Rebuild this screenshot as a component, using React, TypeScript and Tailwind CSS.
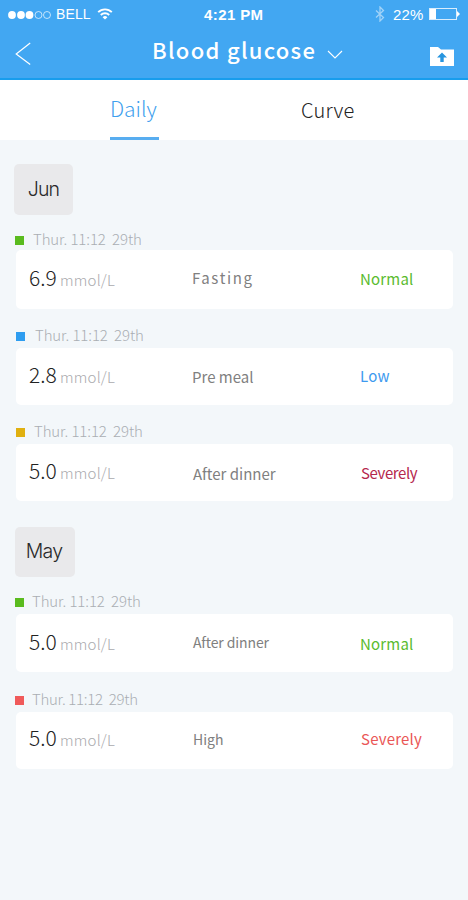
interface IReading {
  date: string;
  marker: string;
  dateStyle: string;
  value: string;
  valueStyle: string;
  period: string;
  periodStyle: string;
  status: string;
  statusStyle: string;
  cardStyle: string;
}

interface IMonth {
  name: string;
  badgeStyle: string;
  readings: IReading[];
}

const months: IMonth[] = [
  {
    name: "Jun",
    badgeStyle: "ml-[14px] mt-[24px] h-[51px] w-[59px]",
    readings: [
      {
        date: "Thur. 11:12  29th",
        marker: "bg-[#5abb1e] ml-[15px]",
        dateStyle: "ml-[9px] tracking-[-0.12px]",
        value: "6.9",
        valueStyle: "pt-[17px]",
        period: "Fasting",
        periodStyle: "pt-[18px] pl-0 text-[15px] tracking-[1.6px]",
        status: "Normal",
        statusStyle: "pt-[19px] pl-0 text-[#5abb2e] tracking-[0.2px]",
        cardStyle: "mt-px h-[59px]",
      },
      {
        date: "Thur. 11:12  29th",
        marker: "bg-[#2e9df0] ml-[16px]",
        dateStyle: "ml-[10px] tracking-[-0.12px]",
        value: "2.8",
        valueStyle: "pt-[16px]",
        period: "Pre meal",
        periodStyle: "pt-[19px] pl-0 text-[15px] tracking-[0px]",
        status: "Low",
        statusStyle: "pt-[18px] pl-0 text-[#3d9aef] tracking-[0.2px]",
        cardStyle: "mt-[3px] h-[57px]",
      },
      {
        date: "Thur. 11:12  29th",
        marker: "bg-[#e0b010] ml-[16px]",
        dateStyle: "ml-[9px] tracking-[-0.12px]",
        value: "5.0",
        valueStyle: "pt-[16px]",
        period: "After dinner",
        periodStyle: "pt-[20px] pl-px text-[15px] tracking-[0px]",
        status: "Severely",
        statusStyle: "pt-[19px] pl-px text-[#b5274c] tracking-[-0.4px]",
        cardStyle: "mt-[3px] h-[57px]",
      },
    ],
  },
  {
    name: "May",
    badgeStyle: "ml-[15px] mt-[26px] h-[50px] w-[60px] pr-[2px]",
    readings: [
      {
        date: "Thur. 11:12  29th",
        marker: "bg-[#5abb1e] ml-[15px]",
        dateStyle: "ml-[8px] tracking-[-0.12px]",
        value: "5.0",
        valueStyle: "pt-[17px]",
        period: "After dinner",
        periodStyle: "pt-[18px] pl-px text-[14px] tracking-[-0.1px]",
        status: "Normal",
        statusStyle: "pt-[20px] pl-0 text-[#5abb2e] tracking-[0.2px]",
        cardStyle: "mt-[3px] mb-px h-[58px]",
      },
      {
        date: "Thur. 11:12  29th",
        marker: "bg-[#f05a5a] ml-[15px]",
        dateStyle: "ml-[8px] tracking-[-0.3px]",
        value: "5.0",
        valueStyle: "pt-[15px]",
        period: "High",
        periodStyle: "pt-[17px] pl-px text-[14px] tracking-[0px]",
        status: "Severely",
        statusStyle: "pt-[17px] pl-px text-[#ea5656] tracking-[0.2px]",
        cardStyle: "mt-[3px] h-[57px]",
      },
    ],
  },
];

const StatusBar = () => (
  <div className="flex h-7 items-center font-['Liberation_Sans',sans-serif] text-[15px] leading-none">
    <svg className="ml-2 mt-px h-3 w-[44px]" viewBox="0 0 44 12" fill="#fff">
      <circle cx="4" cy="6" r="3.9" />
      <circle cx="13" cy="6" r="3.9" />
      <circle cx="21.5" cy="6" r="3.9" />
      <circle cx="30.5" cy="6" r="3.5" fill="none" stroke="#fff" strokeOpacity="0.75" strokeWidth="0.9" />
      <circle cx="39" cy="6" r="3.5" fill="none" stroke="#fff" strokeOpacity="0.75" strokeWidth="0.9" />
    </svg>
    <span className="ml-1 w-[41px] text-[14px] tracking-[0.1px]">BELL</span>
    <svg className="h-3 w-4" viewBox="0 0 16 12" fill="none" stroke="#fff" strokeWidth="1.9">
      <path d="M1.2 4.2a9.6 9.6 0 0 1 13.6 0" />
      <path d="M3.8 7a6 6 0 0 1 8.4 0" />
      <path d="M8 11.6 5.6 9.2a3.4 3.4 0 0 1 4.8 0z" fill="#fff" stroke="none" />
    </svg>
    <span className="ml-[91px] w-[171px] font-bold tracking-[0.4px]">4:21 PM</span>
    <svg className="h-4 w-[10px] opacity-50" viewBox="0 0 10 16" fill="none" stroke="#fff" strokeWidth="1.3">
      <path d="M1 4.5l7.5 7L5 15V1l3.5 3.5-7.5 7" />
    </svg>
    <span className="ml-[8px] w-[36px] tracking-[0.2px]">22%</span>
    <svg className="h-3 w-[31px]" viewBox="0 0 31 12" fill="none" stroke="#fff">
      <rect x="0.5" y="0.5" width="27" height="11" strokeOpacity="0.8" />
      <rect x="1" y="1" width="6" height="10" fill="#fff" stroke="none" />
      <path d="M28 3 31 6 28 9z" fill="#fff" stroke="none" />
    </svg>
  </div>
);

const TitleBar = () => (
  <div className="flex h-[50px] items-start">
    <svg className="ml-[15px] mt-[14px] h-6 w-4" viewBox="0 0 16 24" fill="none" stroke="#fff" strokeWidth="1.2">
      <path d="M15.2 1 1.2 12l14 10.5" />
    </svg>
    <h1 className="ml-[121px] mt-[6px] w-[175px] whitespace-nowrap text-[22px] font-medium leading-[30px] tracking-[1.3px]">
      Blood glucose
    </h1>
    <svg className="mt-[22px] h-[10px] w-4" viewBox="0 0 16 10" fill="none" stroke="#fff" strokeWidth="1.1">
      <path d="M1 1l7 7 7-7" />
    </svg>
    <svg className="ml-[87px] mt-[18px] h-5 w-6" viewBox="0 0 24 20">
      <path d="M0 1h8l3 2.5h13V20H0z" fill="#fff" />
      <path d="M12 6.5 7 11.5h3.3V16h3.4v-4.5H17z" fill="#2795df" />
    </svg>
  </div>
);

const Tabs = () => (
  <nav className="flex h-[60px] items-start bg-white text-[21px] leading-[30px]">
    <button className="ml-[110px] h-[60px] w-[49px] whitespace-nowrap border-b-[3px] border-[#58adf0] pb-[2px] text-left font-light text-[#3f9fee]">
      Daily
    </button>
    <button className="ml-[142px] mt-[15px] text-[20px] font-light tracking-[0.2px] text-[#222]">
      Curve
    </button>
  </nav>
);

const ReadingRow = ({ reading }: { reading: IReading }) => (
  <article>
    <div className="flex h-[20px] items-center">
      <span className={`mt-[3px] h-[9px] w-[9px] ${reading.marker}`} />
      <time
        className={`whitespace-pre text-[15px] font-light leading-[20px] text-[#aaaeb3] ${reading.dateStyle}`}
      >
        {reading.date}
      </time>
    </div>
    <div
      className={`mr-[15px] ml-4 flex items-start rounded-[5px] bg-white leading-[20px] ${reading.cardStyle}`}
    >
      <div className={`ml-[13px] flex w-[163px] items-baseline ${reading.valueStyle}`}>
        <span className="w-[31px] text-[21px] font-light text-[#222]">
          {reading.value}
        </span>
        <span className="text-[15px] font-light tracking-[0.2px] text-[#aaaaae]">
          mmol/L
        </span>
      </div>
      <span className={`w-[168px] text-[#808080] ${reading.periodStyle}`}>
        {reading.period}
      </span>
      <span className={`text-[15px] ${reading.statusStyle}`}>
        {reading.status}
      </span>
    </div>
  </article>
);

const MonthSection = ({ month }: { month: IMonth }) => (
  <section>
    <h2
      className={`flex items-center justify-center rounded-[5px] bg-[#e9e9eb] font-['Inter',sans-serif] text-[19.5px] font-light tracking-[-0.8px] text-[#2a2a2a] ${month.badgeStyle}`}
    >
      {month.name}
    </h2>
    <div className="mt-[14px] flex flex-col gap-4">
      {month.readings.map((reading, index) => (
        <ReadingRow key={index} reading={reading} />
      ))}
    </div>
  </section>
);

export default function App() {
  return (
    <main className="flex h-[900px] w-[468px] flex-col overflow-hidden bg-[#f3f7fa] font-['Noto_Sans_CJK_SC',sans-serif]">
      <header className="h-[80px] border-b-2 border-[#189ded] bg-[#42a7f2] text-white">
        <StatusBar />
        <TitleBar />
      </header>
      <Tabs />
      {months.map((month) => (
        <MonthSection key={month.name} month={month} />
      ))}
    </main>
  );
}
